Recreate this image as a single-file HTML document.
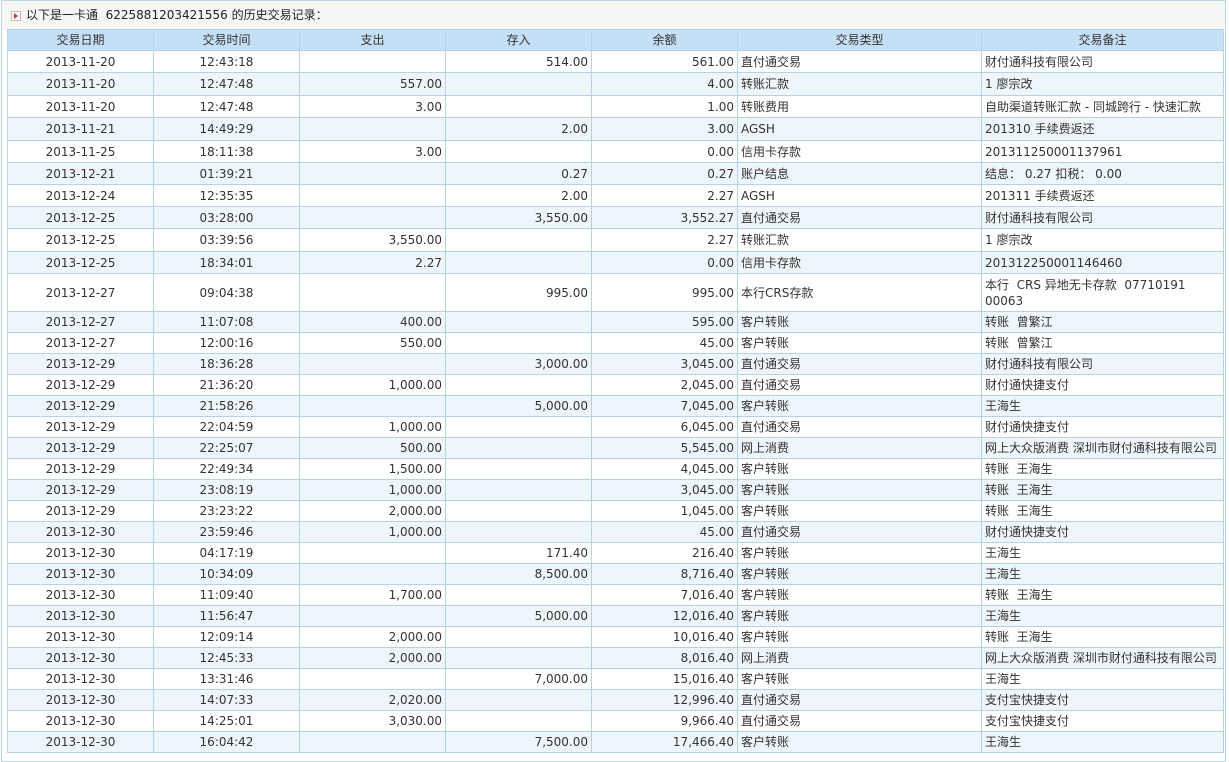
<!DOCTYPE html>
<html><head><meta charset="utf-8"><style>
body{margin:0;background:#fff;font-family:"DejaVu Sans","Noto Sans CJK SC",sans-serif;font-size:12px;color:#333;}
.box{position:absolute;left:1px;top:0;width:1223px;height:760px;border:1px solid #bcd6e3;background:#fff;}
.title{height:29px;background:#f6f6f4;line-height:29px;padding-left:24px;font-size:12px;color:#222;position:relative;}
.title .ic{position:absolute;left:9px;top:10px;width:8px;height:8px;border:1px solid #d9b9b9;background:#fff;}
.title .ic:after{content:"";position:absolute;left:2px;top:1px;border-left:4px solid #c0392b;border-top:3px solid transparent;border-bottom:3px solid transparent;}
table{position:absolute;left:7px;top:29px;border-collapse:collapse;table-layout:fixed;width:1216px;}
td,th{border:1px solid #b4d4e4;padding:0 3px;white-space:nowrap;overflow:hidden;font-weight:normal;line-height:14px;}
th{background:#c5e0f6;height:20px;color:#333;}
td.c{text-align:center}td.r{text-align:right}
tr:nth-child(odd) td{background:#eef6fb}
</style></head><body>
<div class="box"><div class="title"><span class="ic"></span>以下是一卡通&nbsp;&nbsp;6225881203421556 的历史交易记录：</div></div>
<table>
<colgroup><col style="width:146px"><col style="width:146px"><col style="width:146px"><col style="width:146px"><col style="width:146px"><col style="width:244px"><col style="width:242px"></colgroup>
<tr><th>交易日期</th><th>交易时间</th><th>支出</th><th>存入</th><th>余额</th><th>交易类型</th><th>交易备注</th></tr>
<tr style="height:22px"><td class="c">2013-11-20</td><td class="c">12:43:18</td><td class="r"></td><td class="r">514.00</td><td class="r">561.00</td><td>直付通交易</td><td>财付通科技有限公司</td></tr>
<tr style="height:23px"><td class="c">2013-11-20</td><td class="c">12:47:48</td><td class="r">557.00</td><td class="r"></td><td class="r">4.00</td><td>转账汇款</td><td>1 廖宗改</td></tr>
<tr style="height:22px"><td class="c">2013-11-20</td><td class="c">12:47:48</td><td class="r">3.00</td><td class="r"></td><td class="r">1.00</td><td>转账费用</td><td>自助渠道转账汇款 - 同城跨行 - 快速汇款</td></tr>
<tr style="height:23px"><td class="c">2013-11-21</td><td class="c">14:49:29</td><td class="r"></td><td class="r">2.00</td><td class="r">3.00</td><td>AGSH</td><td>201310 手续费返还</td></tr>
<tr style="height:22px"><td class="c">2013-11-25</td><td class="c">18:11:38</td><td class="r">3.00</td><td class="r"></td><td class="r">0.00</td><td>信用卡存款</td><td>201311250001137961</td></tr>
<tr style="height:22px"><td class="c">2013-12-21</td><td class="c">01:39:21</td><td class="r"></td><td class="r">0.27</td><td class="r">0.27</td><td>账户结息</td><td>结息： 0.27 扣税： 0.00</td></tr>
<tr style="height:22px"><td class="c">2013-12-24</td><td class="c">12:35:35</td><td class="r"></td><td class="r">2.00</td><td class="r">2.27</td><td>AGSH</td><td>201311 手续费返还</td></tr>
<tr style="height:22px"><td class="c">2013-12-25</td><td class="c">03:28:00</td><td class="r"></td><td class="r">3,550.00</td><td class="r">3,552.27</td><td>直付通交易</td><td>财付通科技有限公司</td></tr>
<tr style="height:23px"><td class="c">2013-12-25</td><td class="c">03:39:56</td><td class="r">3,550.00</td><td class="r"></td><td class="r">2.27</td><td>转账汇款</td><td>1 廖宗改</td></tr>
<tr style="height:22px"><td class="c">2013-12-25</td><td class="c">18:34:01</td><td class="r">2.27</td><td class="r"></td><td class="r">0.00</td><td>信用卡存款</td><td>201312250001146460</td></tr>
<tr style="height:38px"><td class="c">2013-12-27</td><td class="c">09:04:38</td><td class="r"></td><td class="r">995.00</td><td class="r">995.00</td><td>本行CRS存款</td><td style="line-height:16px">本行&nbsp; CRS 异地无卡存款&nbsp; 07710191<br>00063</td></tr>
<tr style="height:21px"><td class="c">2013-12-27</td><td class="c">11:07:08</td><td class="r">400.00</td><td class="r"></td><td class="r">595.00</td><td>客户转账</td><td>转账&nbsp; 曾繁江</td></tr>
<tr style="height:21px"><td class="c">2013-12-27</td><td class="c">12:00:16</td><td class="r">550.00</td><td class="r"></td><td class="r">45.00</td><td>客户转账</td><td>转账&nbsp; 曾繁江</td></tr>
<tr style="height:21px"><td class="c">2013-12-29</td><td class="c">18:36:28</td><td class="r"></td><td class="r">3,000.00</td><td class="r">3,045.00</td><td>直付通交易</td><td>财付通科技有限公司</td></tr>
<tr style="height:21px"><td class="c">2013-12-29</td><td class="c">21:36:20</td><td class="r">1,000.00</td><td class="r"></td><td class="r">2,045.00</td><td>直付通交易</td><td>财付通快捷支付</td></tr>
<tr style="height:21px"><td class="c">2013-12-29</td><td class="c">21:58:26</td><td class="r"></td><td class="r">5,000.00</td><td class="r">7,045.00</td><td>客户转账</td><td>王海生</td></tr>
<tr style="height:21px"><td class="c">2013-12-29</td><td class="c">22:04:59</td><td class="r">1,000.00</td><td class="r"></td><td class="r">6,045.00</td><td>直付通交易</td><td>财付通快捷支付</td></tr>
<tr style="height:21px"><td class="c">2013-12-29</td><td class="c">22:25:07</td><td class="r">500.00</td><td class="r"></td><td class="r">5,545.00</td><td>网上消费</td><td>网上大众版消费&nbsp;深圳市财付通科技有限公司</td></tr>
<tr style="height:21px"><td class="c">2013-12-29</td><td class="c">22:49:34</td><td class="r">1,500.00</td><td class="r"></td><td class="r">4,045.00</td><td>客户转账</td><td>转账&nbsp; 王海生</td></tr>
<tr style="height:21px"><td class="c">2013-12-29</td><td class="c">23:08:19</td><td class="r">1,000.00</td><td class="r"></td><td class="r">3,045.00</td><td>客户转账</td><td>转账&nbsp; 王海生</td></tr>
<tr style="height:21px"><td class="c">2013-12-29</td><td class="c">23:23:22</td><td class="r">2,000.00</td><td class="r"></td><td class="r">1,045.00</td><td>客户转账</td><td>转账&nbsp; 王海生</td></tr>
<tr style="height:21px"><td class="c">2013-12-30</td><td class="c">23:59:46</td><td class="r">1,000.00</td><td class="r"></td><td class="r">45.00</td><td>直付通交易</td><td>财付通快捷支付</td></tr>
<tr style="height:21px"><td class="c">2013-12-30</td><td class="c">04:17:19</td><td class="r"></td><td class="r">171.40</td><td class="r">216.40</td><td>客户转账</td><td>王海生</td></tr>
<tr style="height:21px"><td class="c">2013-12-30</td><td class="c">10:34:09</td><td class="r"></td><td class="r">8,500.00</td><td class="r">8,716.40</td><td>客户转账</td><td>王海生</td></tr>
<tr style="height:21px"><td class="c">2013-12-30</td><td class="c">11:09:40</td><td class="r">1,700.00</td><td class="r"></td><td class="r">7,016.40</td><td>客户转账</td><td>转账&nbsp; 王海生</td></tr>
<tr style="height:21px"><td class="c">2013-12-30</td><td class="c">11:56:47</td><td class="r"></td><td class="r">5,000.00</td><td class="r">12,016.40</td><td>客户转账</td><td>王海生</td></tr>
<tr style="height:21px"><td class="c">2013-12-30</td><td class="c">12:09:14</td><td class="r">2,000.00</td><td class="r"></td><td class="r">10,016.40</td><td>客户转账</td><td>转账&nbsp; 王海生</td></tr>
<tr style="height:21px"><td class="c">2013-12-30</td><td class="c">12:45:33</td><td class="r">2,000.00</td><td class="r"></td><td class="r">8,016.40</td><td>网上消费</td><td>网上大众版消费&nbsp;深圳市财付通科技有限公司</td></tr>
<tr style="height:21px"><td class="c">2013-12-30</td><td class="c">13:31:46</td><td class="r"></td><td class="r">7,000.00</td><td class="r">15,016.40</td><td>客户转账</td><td>王海生</td></tr>
<tr style="height:21px"><td class="c">2013-12-30</td><td class="c">14:07:33</td><td class="r">2,020.00</td><td class="r"></td><td class="r">12,996.40</td><td>直付通交易</td><td>支付宝快捷支付</td></tr>
<tr style="height:21px"><td class="c">2013-12-30</td><td class="c">14:25:01</td><td class="r">3,030.00</td><td class="r"></td><td class="r">9,966.40</td><td>直付通交易</td><td>支付宝快捷支付</td></tr>
<tr style="height:21px"><td class="c">2013-12-30</td><td class="c">16:04:42</td><td class="r"></td><td class="r">7,500.00</td><td class="r">17,466.40</td><td>客户转账</td><td>王海生</td></tr>
</table>
</body></html>
